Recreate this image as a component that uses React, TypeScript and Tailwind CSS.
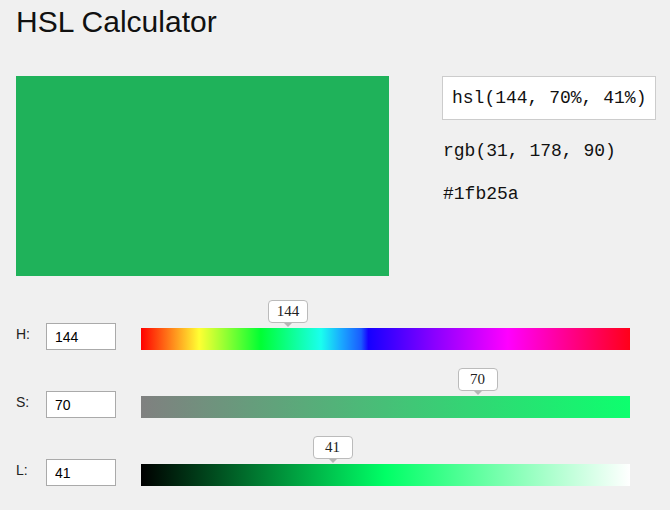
import React from "react";

const hueGradient =
  "linear-gradient(to right, #ff0000 0%, #ffff33 11.9%, #00ff33 24.5%, #1affee 36.8%, #1aa8ff 41%, #1a5cff 45%, #1500ff 46.5%, #8a00ff 60%, #ff00ff 75%, #ff0019 100%)";
const satGradient = "linear-gradient(to right, #808080 0%, #0dff6e 100%)";
const lightGradient = "linear-gradient(to right, #000000 0%, #00ff66 50%, #ffffff 100%)";

function Row({
  label,
  value,
  gradient,
  tip,
}: {
  label: string;
  value: string;
  gradient: string;
  tip: number;
}) {
  return (
    <div className="flex items-start h-[27px]">
      <div className="w-[30px] pt-[3px] text-[14px] leading-[16px] text-[#222]">{label}</div>
      <input
        readOnly
        value={value}
        className="w-[70px] h-[27px] border border-[#aaaaaa] bg-white px-[8px] text-[14px] text-black outline-none"
      />
      <div className="relative ml-[25px] mt-[5px] w-[489px] h-[22px]" style={{ background: gradient }}>
        <div className="absolute top-[-28px] flex flex-col items-center" style={{ left: tip - 20 }}>
          <div
            className="w-[40px] h-[23px] rounded-[4px] border border-[#bbbbbb] bg-white text-center text-[15px] leading-[21px] text-[#222]"
            style={{ fontFamily: '"Liberation Serif", serif' }}
          >
            {value}
          </div>
          <div className="w-0 h-0 border-l-[4px] border-r-[4px] border-t-[4px] border-l-transparent border-r-transparent border-t-[#b5b5b5]" />
        </div>
      </div>
    </div>
  );
}

export default function App() {
  return (
    <div
      className="w-[670px] h-[510px] overflow-hidden bg-[#f0f0f0] pl-4 text-black"
      style={{ fontFamily: '"Liberation Sans", Arial, sans-serif' }}
    >
      <div className="h-[76px] pt-[6.5px]">
        <h1 className="text-[30px] leading-[30px] font-normal text-[#111]">HSL Calculator</h1>
      </div>
      <div className="flex gap-[53px]">
        <div className="w-[373px] h-[200px] bg-[#1fb25a]" />
        <div className="flex flex-col" style={{ fontFamily: '"Liberation Mono", "Courier New", monospace' }}>
          <div className="w-[214px] whitespace-nowrap border border-[#cccccc] bg-white pl-[9px] py-[10px] text-[18px] leading-[22px] text-[#111]">
            hsl(144, 70%, 41%)
          </div>
          <div className="mt-[20px] pl-[1px] whitespace-nowrap text-[18px] leading-[22px] text-[#111]">rgb(31, 178, 90)</div>
          <div className="mt-[21px] pl-[1px] text-[18px] leading-[22px] text-[#111]">#1fb25a</div>
        </div>
      </div>
      <div className="mt-[47px] flex flex-col gap-[41px]">
        <Row label="H:" value="144" gradient={hueGradient} tip={147} />
        <Row label="S:" value="70" gradient={satGradient} tip={336.5} />
        <Row label="L:" value="41" gradient={lightGradient} tip={191.5} />
      </div>
    </div>
  );
}
